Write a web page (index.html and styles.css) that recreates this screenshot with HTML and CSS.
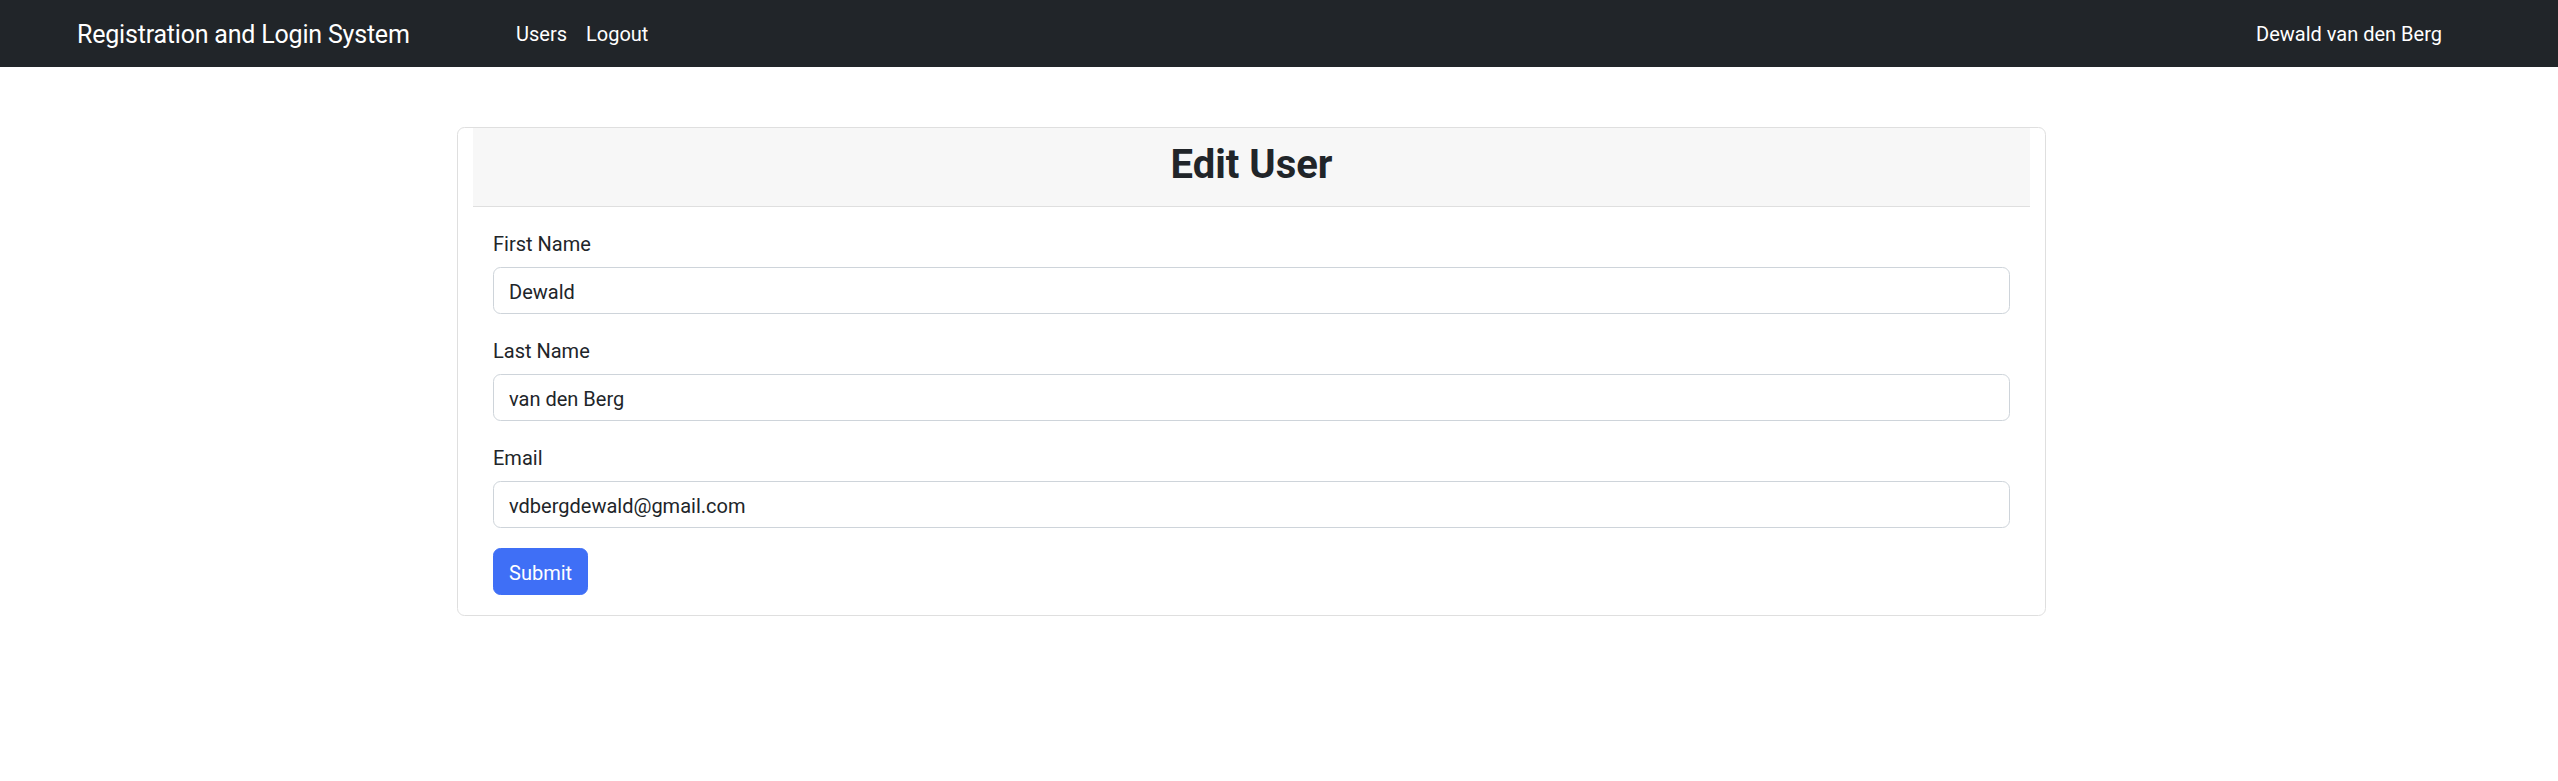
FILE: index.html
```html
<!DOCTYPE html>
<html lang="en">
<head>
<meta charset="utf-8">
<title>Edit User</title>
<link rel="stylesheet" href="styles.css">
</head>
<body>
<nav class="navbar">
  <a class="brand" href="#">Registration and Login System</a>
  <div class="nav-links">
    <a class="nav-link" href="#">Users</a>
    <a class="nav-link" href="#">Logout</a>
  </div>
  <span class="nav-user">Dewald van den Berg</span>
</nav>
<main class="page">
  <div class="card">
    <div class="card-header"><h2>Edit User</h2></div>
    <form class="card-body">
      <div class="field">
        <label for="fn">First Name</label>
        <input id="fn" type="text" value="Dewald">
      </div>
      <div class="field">
        <label for="ln">Last Name</label>
        <input id="ln" type="text" value="van den Berg">
      </div>
      <div class="field">
        <label for="em">Email</label>
        <input id="em" type="email" value="vdbergdewald@gmail.com">
      </div>
      <button type="button" class="btn">Submit</button>
    </form>
  </div>
</main>
</body>
</html>
```

FILE: styles.css
```css
* { box-sizing: border-box; }
body { margin: 0; font-family: Roboto, "Liberation Sans", sans-serif; color: #212529; background: #fff; }
.navbar { height: 67px; background: #212529; display: flex; align-items: center; padding: 1px 116px 0 77px; }
.brand { width: 439px; flex: none; color: #fff; text-decoration: none; font-size: 25px; line-height: 37px; letter-spacing: -0.2px; }
.nav-links { display: flex; gap: 19px; }
.nav-link { color: #fff; text-decoration: none; font-size: 20px; line-height: 30px; }
.nav-user { margin-left: auto; color: #fff; font-size: 20px; line-height: 30px; }
.page { padding: 60px 0 0 457px; }
.card { width: 1589px; border: 1px solid #dfdfdf; border-radius: 7.5px; padding: 0 15px; }
.card-header { background: #f7f7f7; border-bottom: 1px solid #dfdfdf; padding: 10px 20px 10px; }
.card-header h2 { margin: 0 0 7px; padding-top: 3px; font-size: 40px; font-weight: 700; line-height: 48px; text-align: center; }
.card-body { padding: 20px; }
.field { margin-bottom: 20px; }
.field label { display: block; font-size: 20px; line-height: 30px; padding-top: 2px; margin-bottom: 8px; }
.field input { display: block; width: 100%; height: 47px; border: 1px solid #ced4da; border-radius: 7.5px; padding: 2px 15px 0; font: inherit; font-size: 20px; color: #212529; }
.btn { display: block; height: 47px; padding: 2px 15px 0; border: 1px solid #3f6ff6; border-radius: 7.5px; background: #3f6ff6; color: #fff; font: inherit; font-size: 20px; }
```
